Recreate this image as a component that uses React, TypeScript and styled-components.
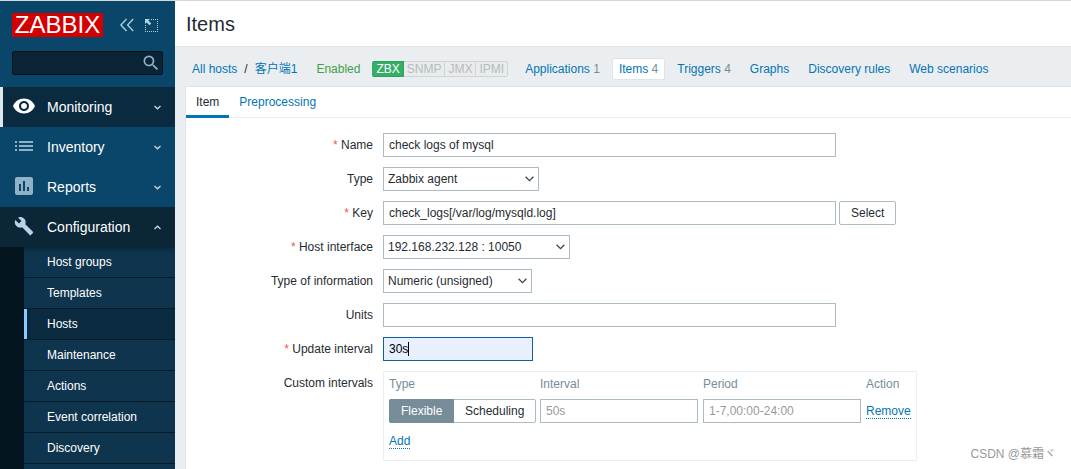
import React from "react";
import styled, { createGlobalStyle, css } from "styled-components";
import { MdAssessment, MdBuild, MdList, MdSearch, MdVisibility } from "react-icons/md";

const GlobalStyle = createGlobalStyle`
  *, *::before, *::after { box-sizing: border-box; }
  body {
    margin: 0;
    background: #ebeef0;
    color: #1f2c33;
    font-family: "Liberation Sans", Arial, "Noto Sans CJK SC", sans-serif;
    font-size: 12px;
    line-height: 14px;
  }
  button, input, select { font: inherit; color: inherit; margin: 0; }
  a { color: #0275b8; text-decoration: none; }
  ul { list-style: none; margin: 0; padding: 0; }
`;

const Page = styled.div`
  position: relative;
  display: flex;
  height: 100vh;
  overflow: hidden;
  border-top: 1px solid #d9d9d9;
`;

/* Sidebar */

const Sidebar = styled.aside`
  display: flex;
  flex-direction: column;
  flex: 0 0 175px;
  background: #0a466a;
  overflow: hidden;
`;

const SidebarHeader = styled.div`
  display: flex;
  align-items: center;
  padding: 12px 12px 0;
`;

const Logo = styled.a`
  flex: none;
  width: 91px;
  height: 24px;
  margin-right: 17px;
  background: #d40000;
  color: #fff;
  font-size: 24px;
  line-height: 24px;
  text-align: center;
`;

const IconButton = styled.button`
  display: flex;
  flex: none;
  padding: 0;
  border: 0;
  background: none;
  color: #b4d1e0;
  & + & { margin-left: 11px; }
`;

const Search = styled.form`
  display: flex;
  align-items: center;
  height: 24px;
  margin: 14px 12px 12px;
  padding-right: 1px;
  background: #0a2435;
  border: 1px solid #04131c;
  border-radius: 2px;
`;

const SearchInput = styled.input`
  flex: 1;
  min-width: 0;
  border: 0;
  outline: 0;
  background: none;
  color: #fff;
`;

const SearchButton = styled.button`
  display: flex;
  padding: 0;
  border: 0;
  background: none;
  color: #8fb2c8;
`;

const Menu = styled.nav`
  display: flex;
  flex-direction: column;
  flex: 1;
`;

const MenuItem = styled.a<{ $tone?: "selected" | "open" }>`
  display: flex;
  align-items: center;
  flex: none;
  height: 40px;
  padding: 0 14px 0 12px;
  color: #fff;
  font-size: 14px;
  ${(p) => p.$tone === "selected" && css`
    background: #0a2a3f;
    box-shadow: inset 3px 0 0 #dfe7eb;
  `}
  ${(p) => p.$tone === "open" && css`background: #0a2637;`}
`;

const MenuIcon = styled.span<{ $color: string }>`
  display: flex;
  justify-content: center;
  width: 24px;
  margin-right: 11px;
  margin-bottom: 2px;
  color: ${(p) => p.$color};
`;

const MenuLabel = styled.span`
  flex: 1;
`;

const SubmenuArea = styled.div`
  flex: 1;
  padding-left: 24px;
  background: #04151f;
`;

const Submenu = styled.ul`
  height: 100%;
  background: #0f344d;
  box-shadow: inset 0 6px 5px -4px #0a2637;
`;

const SubmenuLink = styled.a<{ $current?: boolean }>`
  display: block;
  height: 31px;
  padding: 8px 0 0 23px;
  border-bottom: 1px solid #051b28;
  color: #fff;
  ${(p) => p.$current && css`
    background: #0a2a3f;
    box-shadow: inset 3px 0 0 #8accff;
  `}
`;

/* Main area */

const Main = styled.main`
  display: flex;
  flex-direction: column;
  flex: 1;
  min-width: 0;
`;

const TitleBar = styled.header`
  padding: 11px 11px 10px;
  background: #fff;
  border-bottom: 1px solid #dfe4e7;
`;

const Title = styled.h1`
  margin: 0;
  font-size: 20px;
  line-height: 24px;
  font-weight: 400;
`;

const HostNav = styled.nav`
  display: flex;
  align-items: center;
  flex: none;
  height: 39px;
  padding: 5px 0 0 17px;
  white-space: nowrap;
`;

const Crumbs = styled.div`
  display: flex;
  gap: 7px;
`;

const Enabled = styled.span`
  margin: 0 12px 0 19px;
  color: #429e47;
`;

const Statuses = styled.div`
  display: flex;
  margin-right: 10px;
`;

const Status = styled.span<{ $on?: boolean }>`
  height: 16px;
  padding: 0 3px;
  border: 1px solid #ccd5d9;
  border-left-width: 0;
  background: #ebebeb;
  color: #b0bdc4;
  line-height: 15px;
  &:last-child { border-radius: 0 2px 2px 0; }
  ${(p) => p.$on && css`
    padding-left: 4px;
    background: #34af67;
    border-color: #2f9f5e;
    border-radius: 2px 0 0 2px;
    color: #fff;
  `}
`;

const NavLink = styled.a<{ $current?: boolean }>`
  height: 22px;
  margin-right: 5px;
  padding: 3px 6px;
  border: 1px solid transparent;
  border-radius: 2px;
  ${(p) => p.$current && css`
    background: #fff;
    border-color: #dfe4e7;
  `}
`;

const Count = styled.span`
  color: #768d99;
`;

const Panel = styled.section`
  flex: 1;
  margin-left: 10px;
  background: #fff;
  border: solid #dfe4e7;
  border-width: 1px 0 0 1px;
`;

const Tabs = styled.div`
  display: flex;
  height: 31px;
  border-bottom: 1px solid #ebeef0;
`;

const Tab = styled.a<{ $current?: boolean }>`
  height: 31px;
  padding: 8px 10px 0;
  ${(p) => p.$current && css`
    color: #1f2c33;
    border-bottom: 3px solid #0275b8;
  `}
`;

const Form = styled.form`
  display: grid;
  grid-template-columns: 187px minmax(0, 1fr);
  gap: 10px;
  padding-top: 15px;
`;

const Label = styled.label<{ $required?: boolean }>`
  padding-top: 5px;
  text-align: right;
  ${(p) => p.$required && css`
    &::before { content: "* "; color: #e45959; }
  `}
`;

const Field = styled.div`
  display: flex;
  align-items: flex-start;
  gap: 3px;
`;

const TextInput = styled.input<{ $width: number }>`
  display: block;
  width: ${(p) => p.$width}px;
  height: 24px;
  padding: 0 5px;
  border: 1px solid #acbbc2;
  border-radius: 0;
  background: #fff;
  outline: 0;
  &::placeholder { color: #9a9a9a; opacity: 1; }
`;

const ActiveInput = styled(TextInput)`
  border-color: #0f639a;
  background: #e8f0fe;
  color: #000;
  caret-color: transparent;
`;

const CaretBox = styled.div`
  position: relative;
  display: flex;
  &::after {
    content: "";
    position: absolute;
    left: 25px;
    top: 5px;
    width: 1px;
    height: 14px;
    background: #000;
  }
`;

const SelectBox = styled.div<{ $width: number }>`
  position: relative;
  width: ${(p) => p.$width}px;
  svg {
    position: absolute;
    right: 5px;
    top: 9px;
    pointer-events: none;
  }
`;

const NativeSelect = styled.select`
  appearance: none;
  display: block;
  width: 100%;
  height: 24px;
  padding: 0 20px 0 4px;
  border: 1px solid #acbbc2;
  border-radius: 0;
  background: #fff;
`;

const OutlineButton = styled.button`
  height: 24px;
  padding: 0 11px;
  border: 1px solid #acbbc2;
  border-radius: 2px;
  background: #fff;
`;

const Intervals = styled.div`
  padding: 5px;
  height: 90px;
  border: 1px solid #ebeef0;
`;

const IntervalTable = styled.table`
  border-collapse: collapse;
  th {
    height: 22px;
    padding: 0 0 8px;
    color: #768d99;
    font-weight: 400;
    text-align: left;
  }
  td { padding: 0 5px 0 0; }
  td:first-child { padding-right: 4px; }
  td:last-child { padding: 0; }
`;

const Segments = styled.div`
  display: flex;
  width: 147px;
  height: 24px;
  border: 1px solid #acbbc2;
  border-radius: 2px;
`;

const HiddenRadio = styled.input`
  position: absolute;
  opacity: 0;
  width: 1px;
  height: 1px;
`;

const Segment = styled.label`
  flex: 1 0 auto;
  padding: 4px 10px;
  text-align: center;
  &:has(input:checked) {
    margin: -1px 0 -1px -1px;
    padding: 5px 12px;
    flex-grow: 0;
    border-radius: 2px 0 0 2px;
    background: #768d99;
    color: #fff;
  }
`;

const TextButton = styled.button`
  padding: 0;
  border: 0;
  border-bottom: 1px dotted #0275b8;
  background: none;
  color: #0275b8;
  line-height: 14px;
`;

const AddRow = styled.div`
  padding-top: 11px;
`;

const Watermark = styled.div`
  position: absolute;
  right: 15px;
  bottom: 8px;
  color: #999;
`;

function Chevron({ up }: { up?: boolean }) {
  return (
    <svg width="7" height="5" viewBox="0 0 7 5" fill="none" stroke="#c8dbe5" strokeWidth="1.3">
      <path d={up ? "M.5 4 3.5 1.2 6.5 4" : "M.5 1 3.5 3.8 6.5 1"} />
    </svg>
  );
}

function Dropdown({ id, value, width }: { id: string; value: string; width: number }) {
  return (
    <SelectBox $width={width}>
      <NativeSelect id={id} defaultValue={value}>
        <option>{value}</option>
      </NativeSelect>
      <svg width="9" height="6" viewBox="0 0 9 6" fill="none" stroke="#3c454b" strokeWidth="1.3">
        <path d="M.6.7 4.5 4.6 8.4.7" />
      </svg>
    </SelectBox>
  );
}

const submenu = ["Host groups", "Templates", "Hosts", "Maintenance", "Actions", "Event correlation", "Discovery"];

const hostLinks: { label: string; count?: number }[] = [
  { label: "Applications", count: 1 },
  { label: "Items", count: 4 },
  { label: "Triggers", count: 4 },
  { label: "Graphs" },
  { label: "Discovery rules" },
  { label: "Web scenarios" },
];

export default function App() {
  return (
    <Page>
      <GlobalStyle />
      <Sidebar>
        <SidebarHeader>
          <Logo href="#">ZABBIX</Logo>
          <IconButton aria-label="Collapse sidebar">
            <svg width="14" height="14" viewBox="0 0 14 14" fill="none" stroke="currentColor" strokeWidth="1.3">
              <path d="M6.5 1 .9 7l5.6 6M13.2 1 7.6 7l5.6 6" />
            </svg>
          </IconButton>
          <IconButton aria-label="Hide sidebar">
            <svg width="13" height="13" viewBox="0 0 13 13" fill="none" stroke="currentColor">
              <path d="M6 .5h7M.5 6v7M12.5 0v13M0 12.5h13" strokeDasharray="1 1" />
              <path d="M0 0h5L3.4 1.6 6.3 4.5 4.5 6.3 1.6 3.4 0 5z" fill="currentColor" stroke="none" />
            </svg>
          </IconButton>
        </SidebarHeader>
        <Search>
          <SearchInput aria-label="Search" />
          <SearchButton type="button" aria-label="Submit search"><MdSearch size={20} /></SearchButton>
        </Search>
        <Menu>
          <MenuItem href="#" $tone="selected">
            <MenuIcon $color="#fff"><MdVisibility size={24} /></MenuIcon>
            <MenuLabel>Monitoring</MenuLabel>
            <Chevron />
          </MenuItem>
          <MenuItem href="#">
            <MenuIcon $color="#8fb2c8"><MdList size={24} /></MenuIcon>
            <MenuLabel>Inventory</MenuLabel>
            <Chevron />
          </MenuItem>
          <MenuItem href="#">
            <MenuIcon $color="#8fb2c8"><MdAssessment size={24} /></MenuIcon>
            <MenuLabel>Reports</MenuLabel>
            <Chevron />
          </MenuItem>
          <MenuItem href="#" $tone="open">
            <MenuIcon $color="#b8d4e8"><MdBuild size={20} /></MenuIcon>
            <MenuLabel>Configuration</MenuLabel>
            <Chevron up />
          </MenuItem>
          <SubmenuArea>
            <Submenu>
              {submenu.map((name) => (
                <li key={name}>
                  <SubmenuLink href="#" $current={name === "Hosts"}>{name}</SubmenuLink>
                </li>
              ))}
            </Submenu>
          </SubmenuArea>
        </Menu>
      </Sidebar>

      <Main>
        <TitleBar><Title>Items</Title></TitleBar>
        <HostNav>
          <Crumbs>
            <a href="#">All hosts</a>
            <span>/</span>
            <a href="#">客户端1</a>
          </Crumbs>
          <Enabled>Enabled</Enabled>
          <Statuses>
            <Status $on>ZBX</Status>
            <Status>SNMP</Status>
            <Status>JMX</Status>
            <Status>IPMI</Status>
          </Statuses>
          {hostLinks.map(({ label, count }) => (
            <NavLink key={label} href="#" $current={label === "Items"}>
              {label}{count && <Count> {count}</Count>}
            </NavLink>
          ))}
        </HostNav>
        <Panel>
          <Tabs>
            <Tab href="#" $current>Item</Tab>
            <Tab href="#">Preprocessing</Tab>
          </Tabs>
          <Form>
            <Label htmlFor="name" $required>Name</Label>
            <Field><TextInput id="name" $width={453} defaultValue="check logs of mysql" /></Field>

            <Label htmlFor="type">Type</Label>
            <Field><Dropdown id="type" width={156} value="Zabbix agent" /></Field>

            <Label htmlFor="key" $required>Key</Label>
            <Field>
              <TextInput id="key" $width={453} defaultValue="check_logs[/var/log/mysqld.log]" />
              <OutlineButton type="button">Select</OutlineButton>
            </Field>

            <Label htmlFor="interface" $required>Host interface</Label>
            <Field><Dropdown id="interface" width={187} value="192.168.232.128 : 10050" /></Field>

            <Label htmlFor="info">Type of information</Label>
            <Field><Dropdown id="info" width={149} value="Numeric (unsigned)" /></Field>

            <Label htmlFor="units">Units</Label>
            <Field><TextInput id="units" $width={453} /></Field>

            <Label htmlFor="update" $required>Update interval</Label>
            <Field>
              <CaretBox><ActiveInput id="update" $width={150} defaultValue="30s" /></CaretBox>
            </Field>

            <Label as="span">Custom intervals</Label>
            <Field>
              <Intervals>
                <IntervalTable>
                  <thead>
                    <tr><th>Type</th><th>Interval</th><th>Period</th><th>Action</th></tr>
                  </thead>
                  <tbody>
                    <tr>
                      <td>
                        <Segments>
                          <Segment><HiddenRadio type="radio" name="kind" defaultChecked />Flexible</Segment>
                          <Segment><HiddenRadio type="radio" name="kind" />Scheduling</Segment>
                        </Segments>
                      </td>
                      <td><TextInput aria-label="Interval" $width={158} placeholder="50s" /></td>
                      <td><TextInput aria-label="Period" $width={158} placeholder="1-7,00:00-24:00" /></td>
                      <td><TextButton type="button">Remove</TextButton></td>
                    </tr>
                  </tbody>
                </IntervalTable>
                <AddRow><TextButton type="button">Add</TextButton></AddRow>
              </Intervals>
            </Field>
          </Form>
        </Panel>
      </Main>
      <Watermark>CSDN @慕霜ヾ</Watermark>
    </Page>
  );
}
